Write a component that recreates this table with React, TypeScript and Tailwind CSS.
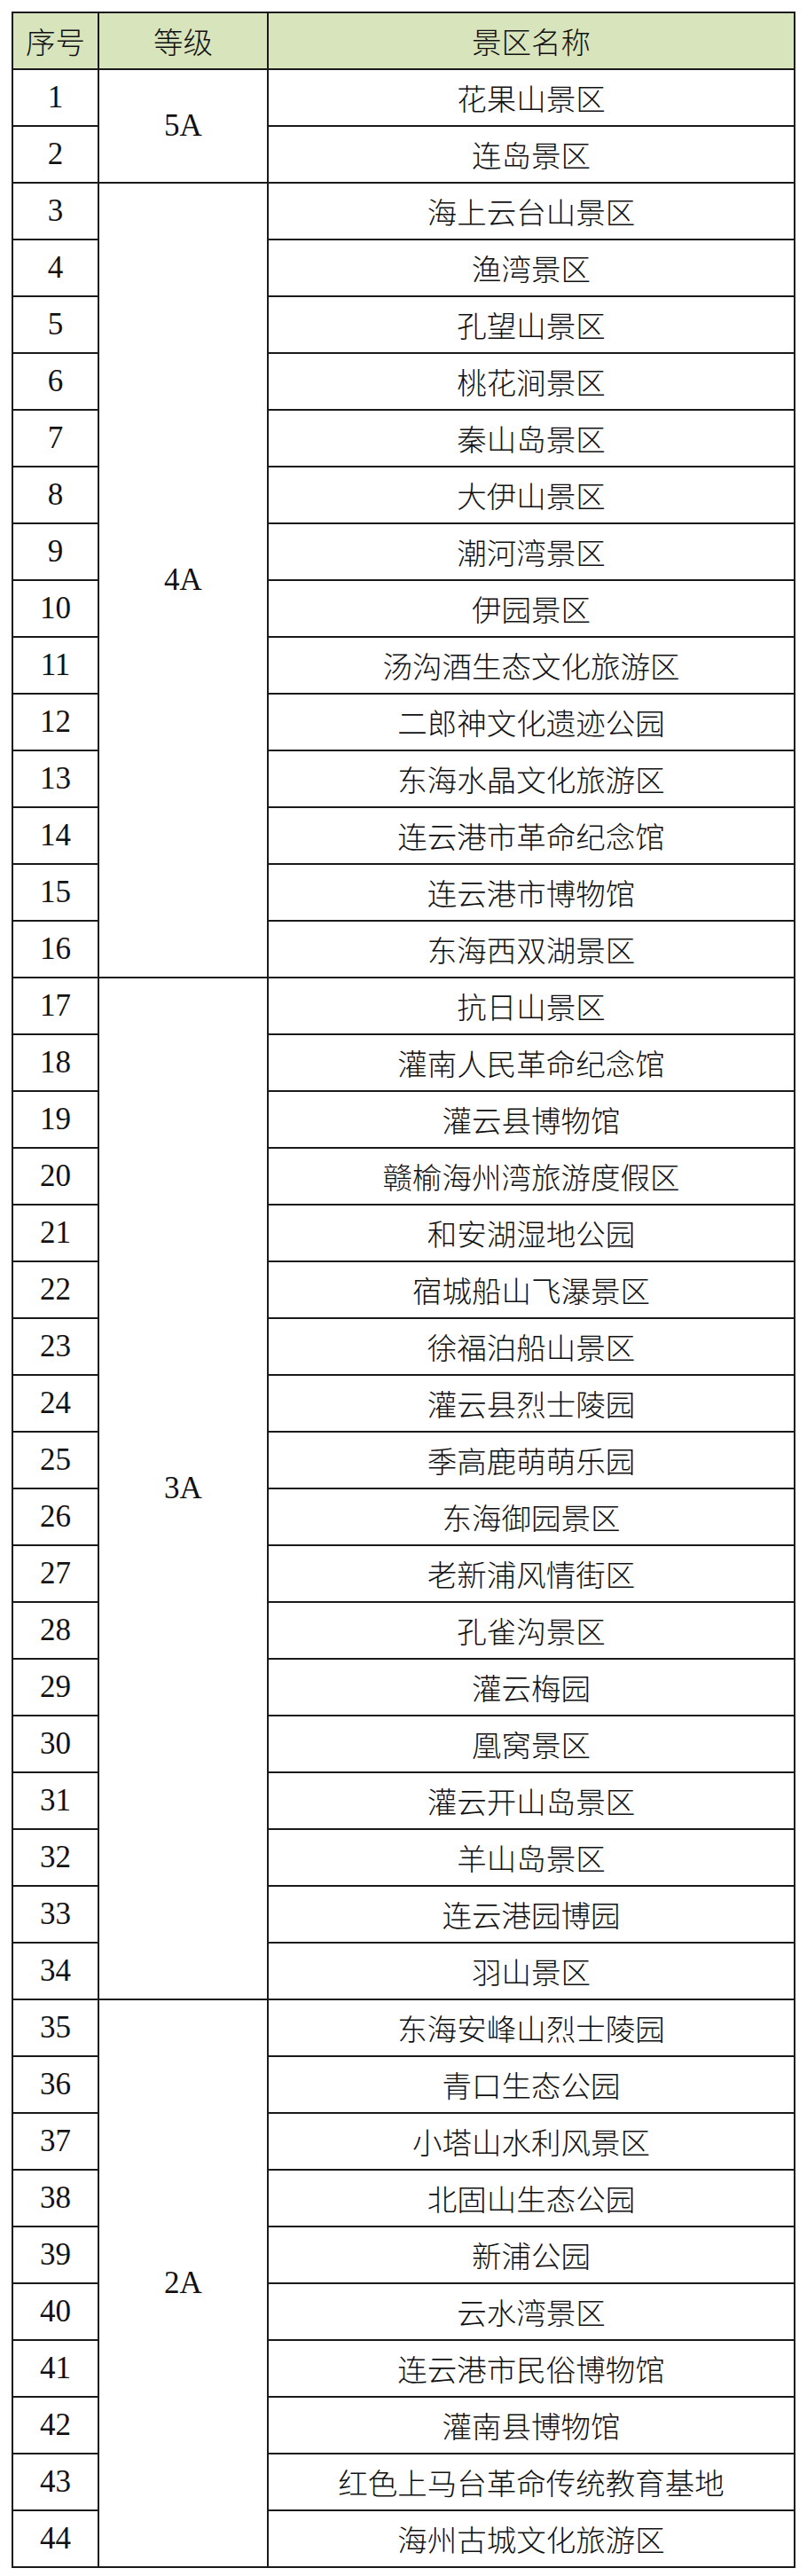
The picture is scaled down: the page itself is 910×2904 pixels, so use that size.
import React from 'react';

type Group = { grade: string; names: string[] };

const groups: Group[] = [
  { grade: '5A', names: ['花果山景区', '连岛景区'] },
  {
    grade: '4A',
    names: [
      '海上云台山景区',
      '渔湾景区',
      '孔望山景区',
      '桃花涧景区',
      '秦山岛景区',
      '大伊山景区',
      '潮河湾景区',
      '伊园景区',
      '汤沟酒生态文化旅游区',
      '二郎神文化遗迹公园',
      '东海水晶文化旅游区',
      '连云港市革命纪念馆',
      '连云港市博物馆',
      '东海西双湖景区',
    ],
  },
  {
    grade: '3A',
    names: [
      '抗日山景区',
      '灌南人民革命纪念馆',
      '灌云县博物馆',
      '赣榆海州湾旅游度假区',
      '和安湖湿地公园',
      '宿城船山飞瀑景区',
      '徐福泊船山景区',
      '灌云县烈士陵园',
      '季高鹿萌萌乐园',
      '东海御园景区',
      '老新浦风情街区',
      '孔雀沟景区',
      '灌云梅园',
      '凰窝景区',
      '灌云开山岛景区',
      '羊山岛景区',
      '连云港园博园',
      '羽山景区',
    ],
  },
  {
    grade: '2A',
    names: [
      '东海安峰山烈士陵园',
      '青口生态公园',
      '小塔山水利风景区',
      '北固山生态公园',
      '新浦公园',
      '云水湾景区',
      '连云港市民俗博物馆',
      '灌南县博物馆',
      '红色上马台革命传统教育基地',
      '海州古城文化旅游区',
    ],
  },
];

const cjk = "font-['Noto_Sans_CJK_SC',sans-serif] text-[33.5px] font-light";
const latin = "font-['Liberation_Serif','Noto_Sans_CJK_SC',serif] text-[35px]";
const cell = 'border-2 border-[#1a1a1a] text-center align-middle p-0 text-[#111]';

export default function App() {
  let n = 0;
  return (
    <div className="bg-white p-[13px] w-[910px]">
      <table className="w-full border-collapse table-fixed">
        <colgroup>
          <col className="w-[97px]" />
          <col className="w-[191px]" />
          <col />
        </colgroup>
        <thead>
          <tr className="h-[64px] bg-[#d8e4bc]">
            <th className={`${cell} ${cjk}`}>序号</th>
            <th className={`${cell} ${cjk}`}>等级</th>
            <th className={`${cell} ${cjk}`}>景区名称</th>
          </tr>
        </thead>
        <tbody>
          {groups.map((g) =>
            g.names.map((name, i) => {
              n += 1;
              return (
                <tr key={n} className="h-[64px]">
                  <td className={`${cell} ${latin}`}>{n}</td>
                  {i === 0 && (
                    <td rowSpan={g.names.length} className={`${cell} ${latin}`}>
                      {g.grade}
                    </td>
                  )}
                  <td className={`${cell} ${cjk}`}>{name}</td>
                </tr>
              );
            })
          )}
        </tbody>
      </table>
    </div>
  );
}
